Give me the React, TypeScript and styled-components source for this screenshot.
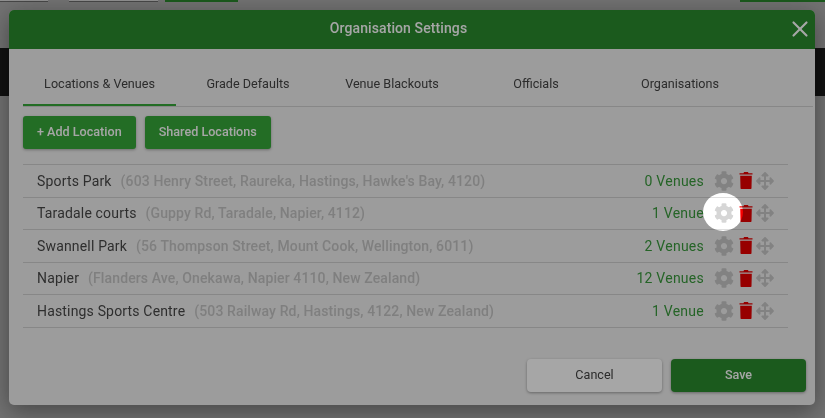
import React from "react";
import styled, { createGlobalStyle } from "styled-components";
import { FaCog, FaArrowsAlt } from "react-icons/fa";
import { X } from "lucide-react";

const GlobalStyle = createGlobalStyle`
  html, body {
    margin: 0;
    padding: 0;
    height: 100%;
    overflow: hidden;
    font-family: Roboto, "Liberation Sans", sans-serif;
  }
`;

const locations = [
  { name: "Sports Park", address: "(603 Henry Street, Raureka, Hastings, Hawke's Bay, 4120)", venues: "0 Venues" },
  { name: "Taradale courts", address: "(Guppy Rd, Taradale, Napier, 4112)", venues: "1 Venue" },
  { name: "Swannell Park", address: "(56 Thompson Street, Mount Cook, Wellington, 6011)", venues: "2 Venues" },
  { name: "Napier", address: "(Flanders Ave, Onekawa, Napier 4110, New Zealand)", venues: "12 Venues" },
  { name: "Hastings Sports Centre", address: "(503 Railway Rd, Hastings, 4122, New Zealand)", venues: "1 Venue" },
];

const tabs = ["Locations & Venues", "Grade Defaults", "Venue Blackouts", "Officials", "Organisations"];

const TrashIcon = () => (
  <svg width="14" height="17" viewBox="0 0 14 17">
    <path d="M0.5 1.2 L4.5 1.2 L5 0 L9 0 L9.5 1.2 L13.5 1.2 L13.5 2.6 L0.5 2.6 Z" fill="#e80000" />
    <path d="M1.2 3.8 L12.8 3.8 L12.5 16.2 Q12.5 17 11.7 17 L2.3 17 Q1.5 17 1.5 16.2 Z" fill="#e80000" />
  </svg>
);

const App = () => {
  return (
    <Page>
      <GlobalStyle />
      <TopBar>
        <OutlineStub $width={48} />
        <OutlineStub $width={89} />
        <GreenStub $width={73} />
        <GreenStub $width={85} $push />
      </TopBar>
      <DarkBand />
      <Backdrop>
        <Modal>
          <Header>
            Organisation Settings
            <CloseButton>
              <X size={26} strokeWidth={2} />
            </CloseButton>
          </Header>
          <Tabs>
            {tabs.map((t, i) => (
              <Tab key={t} $active={i === 0}>
                {t}
              </Tab>
            ))}
          </Tabs>
          <Body>
            <Actions>
              <GreenButton>+ Add Location</GreenButton>
              <GreenButton>Shared Locations</GreenButton>
            </Actions>
            <List>
              {locations.map((l) => (
                <Row key={l.name}>
                  <Name>{l.name}</Name>
                  <Address>{l.address}</Address>
                  <Venues>{l.venues}</Venues>
                  <Icons>
                    <FaCog color="#c8c8c8" size={20} />
                    <TrashIcon />
                    <FaArrowsAlt color="#c8c8c8" size={18} />
                  </Icons>
                </Row>
              ))}
            </List>
          </Body>
          <Footer>
            <CancelButton>Cancel</CancelButton>
            <SaveButton>Save</SaveButton>
          </Footer>
        </Modal>
      </Backdrop>
      <Spotlight />
    </Page>
  );
};

const Page = styled.div`
  position: relative;
  width: 825px;
  height: 418px;
  overflow: hidden;
  background: #b0b0b0;
`;

const TopBar = styled.div`
  display: flex;
  height: 48px;
`;

const OutlineStub = styled.div<{ $width: number }>`
  width: ${(p) => p.$width}px;
  height: 2px;
  margin-right: 21px;
  border-bottom: 1px solid #6e6e6e;
  box-sizing: border-box;
  background: #ddd;

  & + & {
    margin-right: 7px;
  }
`;

const GreenStub = styled.div<{ $width: number; $push?: boolean }>`
  width: ${(p) => p.$width}px;
  height: 2px;
  background: #2a8a2d;
  margin-left: ${(p) => (p.$push ? "auto" : "0")};
`;

const DarkBand = styled.div`
  height: 48px;
  background: #1a1a1a;
`;

const Backdrop = styled.div`
  position: absolute;
  inset: 0;
  padding: 10px 10px 13px 9px;
`;

const Modal = styled.div`
  display: flex;
  flex-direction: column;
  height: 395px;
  background: #f0f0f0;
  border-radius: 5px;
  overflow: hidden;
  box-shadow: 0 6px 24px rgba(0, 0, 0, 0.4);
`;

const Header = styled.div`
  position: relative;
  flex: none;
  height: 39px;
  line-height: 37px;
  padding-right: 27px;
  text-align: center;
  font-size: 14px;
  font-weight: 500;
  letter-spacing: 0.1px;
  color: #fff;
  background: #2a8a2d;
`;

const CloseButton = styled.span`
  position: absolute;
  right: 2px;
  top: 6px;
  display: flex;
`;

const Tabs = styled.div`
  display: grid;
  grid-template-columns: 153px repeat(4, 144px);
  flex: none;
  height: 58px;
  margin: 0 2px 0 14px;
  border-bottom: 1px solid #d0d0d0;
  box-sizing: border-box;
`;

const Tab = styled.div<{ $active?: boolean }>`
  display: flex;
  align-items: center;
  justify-content: center;
  padding-top: 13px;
  font-size: 12.6px;
  color: #444;
  border-bottom: 2px solid ${(p) => (p.$active ? "#36a839" : "transparent")};
`;

const Body = styled.div`
  flex: 1;
  padding: 9px 27px 0 14px;
`;

const Actions = styled.div`
  display: flex;
  gap: 9px;
  margin-bottom: 15px;
`;

const GreenButton = styled.div`
  display: flex;
  align-items: center;
  height: 33px;
  padding: 0 14px 2px;
  box-sizing: border-box;
  border-radius: 3px;
  font-size: 12.6px;
  font-weight: 500;
  color: #fff;
  background: #36a839;
  box-shadow: 0 1px 3px rgba(0, 0, 0, 0.3);
`;

const List = styled.div`
  border-top: 1px solid #d0d0d0;
`;

const Row = styled.div`
  display: flex;
  align-items: center;
  height: 32.5px;
  box-sizing: border-box;
  padding: 0 14px;
  border-bottom: 1px solid #d0d0d0;
  font-size: 14px;
`;

const Name = styled.span`
  color: #484848;
  letter-spacing: 0.17px;
`;

const Address = styled.span`
  margin-left: 9px;
  color: #c4c4c4;
  font-weight: 500;
  letter-spacing: 0.12px;
`;

const Venues = styled.span`
  margin-left: auto;
  color: #3a9a3d;
  letter-spacing: 0.25px;
`;

const Icons = styled.div`
  display: flex;
  align-items: center;
  gap: 5px;
  margin-left: 10px;

  svg:last-child {
    margin-left: -2px;
  }
`;

const Footer = styled.div`
  display: flex;
  justify-content: flex-end;
  gap: 9px;
  padding: 0 9px 13px 0;
`;

const CancelButton = styled.div`
  display: flex;
  align-items: center;
  justify-content: center;
  width: 135px;
  height: 33px;
  padding-bottom: 2px;
  box-sizing: border-box;
  border-radius: 4px;
  font-size: 12.6px;
  color: #444;
  background: #fff;
  box-shadow: 0 1px 3px rgba(0, 0, 0, 0.35);
`;

const SaveButton = styled(CancelButton)`
  font-weight: 500;
  color: #fff;
  background: #2a8a2d;
`;

const Spotlight = styled.div`
  position: absolute;
  left: 703px;
  top: 193px;
  width: 40px;
  height: 38px;
  border-radius: 50%;
  box-shadow: 0 0 0 1000px rgba(0, 0, 0, 0.35);

  &::after {
    content: "";
    position: absolute;
    inset: 0;
    border-radius: 50%;
    background: #111;
    mix-blend-mode: color-dodge;
  }
`;

export default App;
